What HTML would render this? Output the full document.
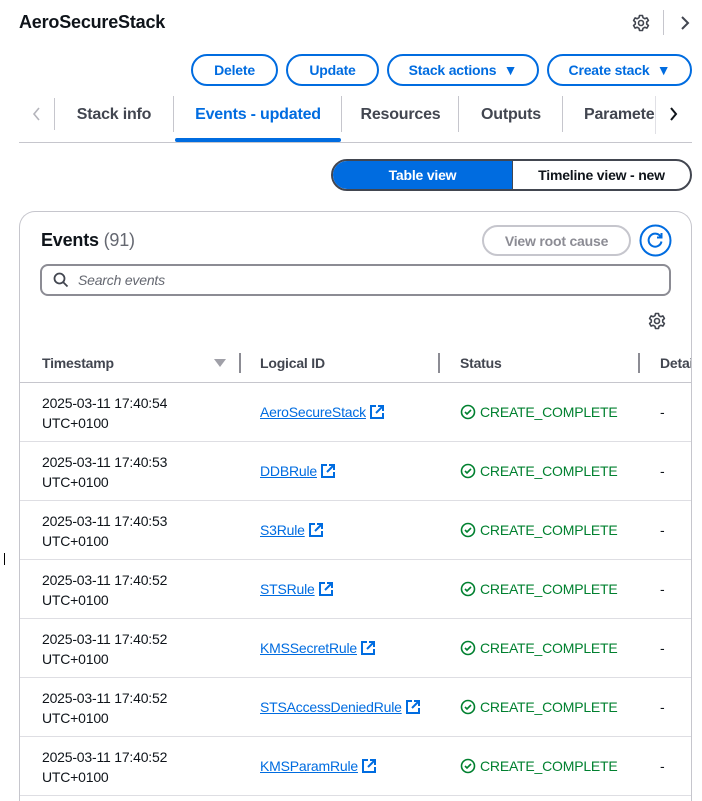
<!DOCTYPE html>
<html><head><meta charset="utf-8"><style>
*{box-sizing:border-box;margin:0;padding:0}
html,body{width:702px;height:801px;overflow:hidden}
body{background:#fff;font-family:"Liberation Sans",sans-serif;color:#0f141a;position:relative;letter-spacing:-0.2px}
.a{position:absolute}
.btn{position:absolute;height:32px;border:2px solid #006ce0;border-radius:16px;color:#006ce0;font-weight:bold;font-size:14px;display:flex;align-items:center;justify-content:center;top:54px}
.tab{position:absolute;top:96px;height:38px;font-size:16px;font-weight:bold;color:#424650;display:flex;align-items:center;justify-content:center}
.sep{position:absolute;width:1px;background:#c6c6cd}
.card{position:absolute;left:19px;top:211px;width:673px;height:590px;border:1px solid #c6c6cd;border-bottom:none;border-radius:16px 16px 0 0;overflow:hidden}
.row{position:absolute;left:0;width:680px;height:59px;border-top:1px solid #dedee3;font-size:14px}
.ts{position:absolute;left:22px;top:10px;line-height:20px}
.lid{position:absolute;left:240px;top:21px;color:#006ce0;text-decoration:underline;display:flex;align-items:center;gap:3px}
.st{position:absolute;left:440px;top:21px;color:#00802f;display:flex;align-items:center;gap:4px}
.dash{position:absolute;left:640px;top:21px}
</style></head><body>
<div class="a" style="left:19px;top:12px;font-size:18px;font-weight:bold">AeroSecureStack</div>
<svg class="a" style="left:632px;top:14px" width="18" height="18" viewBox="0 0 18 18"><path d="M7.5 1.5h3l.5 2.2 1.8 1 2.1-.8 1.5 2.6-1.7 1.5v2l1.7 1.5-1.5 2.6-2.1-.8-1.8 1-.5 2.2h-3l-.5-2.2-1.8-1-2.1.8-1.5-2.6 1.7-1.5v-2L1.6 6.5l1.5-2.6 2.1.8 1.8-1z" fill="none" stroke="#424650" stroke-width="1.6" stroke-linejoin="round"/><circle cx="9" cy="9" r="2.5" fill="none" stroke="#424650" stroke-width="1.6"/></svg>
<div class="sep" style="left:663px;top:10px;height:25px"></div>
<svg class="a" style="left:680px;top:15px" width="10" height="16"><path d="M2 2l6 6-6 6" fill="none" stroke="#424650" stroke-width="2"/></svg>
<div class="btn" style="left:191px;width:87px">Delete</div>
<div class="btn" style="left:286px;width:93px">Update</div>
<div class="btn" style="left:387px;width:152px">Stack actions &nbsp;▼</div>
<div class="btn" style="left:547px;width:145px">Create stack &nbsp;▼</div>
<svg class="a" style="left:32px;top:106px" width="10" height="16"><path d="M7 2l-5 6 5 6" fill="none" stroke="#b4b4bb" stroke-width="1.6"/></svg>
<div class="sep" style="left:54px;top:98px;height:32px"></div>
<div class="tab" style="left:55px;width:118px">Stack info</div>
<div class="sep" style="left:173px;top:96px;height:36px"></div>
<div class="tab" style="left:174px;width:168px;color:#006ce0">Events - updated</div>
<div class="a" style="left:175px;top:138px;width:166px;height:4px;background:#006ce0;border-radius:2px"></div>
<div class="sep" style="left:341px;top:96px;height:36px"></div>
<div class="tab" style="left:342px;width:117px">Resources</div>
<div class="sep" style="left:458px;top:96px;height:36px"></div>
<div class="tab" style="left:459px;width:104px">Outputs</div>
<div class="sep" style="left:562px;top:96px;height:36px"></div>
<div class="tab" style="left:563px;width:95px;justify-content:flex-start;padding-left:21px;overflow:hidden;white-space:nowrap">Parameters</div>
<div class="a" style="left:655px;top:96px;width:47px;height:38px;background:#fff;border-left:1px solid #e0e0e5"></div>
<svg class="a" style="left:669px;top:106px" width="10" height="16"><path d="M2 2l5 6-5 6" fill="none" stroke="#0f141a" stroke-width="2"/></svg>
<div class="a" style="left:19px;top:142px;width:673px;height:1px;background:#c6c6cd"></div>
<div class="a" style="left:331px;top:159px;width:361px;height:32px;border:2px solid #424650;border-radius:16px;overflow:hidden;display:flex;font-size:14px;font-weight:bold">
<div style="width:180px;background:#006ce0;color:#fff;display:flex;align-items:center;justify-content:center;border-right:1px solid #424650">Table view</div>
<div style="flex:1;display:flex;align-items:center;justify-content:center;color:#0f141a">Timeline view - new</div></div>
<div class="card">
<div class="a" style="left:21px;top:18px;font-size:18px"><b>Events</b> <span style="color:#656871">(91)</span></div>
<div class="a" style="left:462px;top:13px;width:149px;height:31px;border:2px solid #c6c6cd;border-radius:16px;color:#8c8c94;font-weight:bold;font-size:14px;display:flex;align-items:center;justify-content:center">View root cause</div>
<svg class="a" style="left:619px;top:12px" width="33" height="33" viewBox="0 0 33 33"><circle cx="16.5" cy="16.5" r="15" fill="none" stroke="#006ce0" stroke-width="2"/><path d="M21.5 12.5a6.5 6.5 0 1 0 1 5" fill="none" stroke="#006ce0" stroke-width="2"/><path d="M22.5 9v4.5h-4.5" fill="none" stroke="#006ce0" stroke-width="2"/></svg>
<div class="a" style="left:20px;top:52px;width:631px;height:32px;border:2px solid #8c8c94;border-radius:8px"></div>
<svg class="a" style="left:33px;top:60px" width="16" height="16"><circle cx="6.5" cy="6.5" r="5" fill="none" stroke="#424650" stroke-width="1.8"/><path d="M10 10l4.5 4.5" stroke="#424650" stroke-width="1.8"/></svg>
<div class="a" style="left:58px;top:60px;font-size:14px;font-style:italic;color:#656871">Search events</div>
<svg class="a" style="left:628px;top:100px" width="18" height="18" viewBox="0 0 18 18"><path d="M7.5 1.5h3l.5 2.2 1.8 1 2.1-.8 1.5 2.6-1.7 1.5v2l1.7 1.5-1.5 2.6-2.1-.8-1.8 1-.5 2.2h-3l-.5-2.2-1.8-1-2.1.8-1.5-2.6 1.7-1.5v-2L1.6 6.5l1.5-2.6 2.1.8 1.8-1z" fill="none" stroke="#424650" stroke-width="1.6" stroke-linejoin="round"/><circle cx="9" cy="9" r="2.5" fill="none" stroke="#424650" stroke-width="1.6"/></svg>
<div class="a" style="left:22px;top:143px;font-size:14px;font-weight:bold;color:#424650">Timestamp</div>
<svg class="a" style="left:194px;top:147px" width="12" height="9"><path d="M0 0h12L6 8z" fill="#a0a0a8"/></svg>
<div class="sep" style="left:219px;top:141px;height:20px;background:#8c8c94;width:2px"></div>
<div class="a" style="left:240px;top:143px;font-size:14px;font-weight:bold;color:#424650">Logical ID</div>
<div class="sep" style="left:418px;top:141px;height:20px;background:#8c8c94;width:2px"></div>
<div class="a" style="left:440px;top:143px;font-size:14px;font-weight:bold;color:#424650">Status</div>
<div class="sep" style="left:618px;top:141px;height:20px;background:#8c8c94;width:2px"></div>
<div class="a" style="left:640px;top:143px;font-size:14px;font-weight:bold;color:#424650;white-space:nowrap">Details</div>
<div class="row" style="top:170px;border-color:#c6c6cd"><div class="ts">2025-03-11 17:40:54<br>UTC+0100</div><div class="lid">AeroSecureStack <svg width="16" height="16"><path d="M7 2H2v12h12V9" fill="none" stroke="#006ce0" stroke-width="2"/><path d="M9 2h5v5M14 2L7 9" fill="none" stroke="#006ce0" stroke-width="2"/></svg></div><div class="st"><svg width="16" height="16"><circle cx="8" cy="8" r="6.5" fill="none" stroke="#00802f" stroke-width="1.6"/><path d="M5 8l2 2 4-4" fill="none" stroke="#00802f" stroke-width="1.6"/></svg>CREATE_COMPLETE</div><div class="dash">-</div></div>
<div class="row" style="top:229px"><div class="ts">2025-03-11 17:40:53<br>UTC+0100</div><div class="lid">DDBRule <svg width="16" height="16"><path d="M7 2H2v12h12V9" fill="none" stroke="#006ce0" stroke-width="2"/><path d="M9 2h5v5M14 2L7 9" fill="none" stroke="#006ce0" stroke-width="2"/></svg></div><div class="st"><svg width="16" height="16"><circle cx="8" cy="8" r="6.5" fill="none" stroke="#00802f" stroke-width="1.6"/><path d="M5 8l2 2 4-4" fill="none" stroke="#00802f" stroke-width="1.6"/></svg>CREATE_COMPLETE</div><div class="dash">-</div></div>
<div class="row" style="top:288px"><div class="ts">2025-03-11 17:40:53<br>UTC+0100</div><div class="lid">S3Rule <svg width="16" height="16"><path d="M7 2H2v12h12V9" fill="none" stroke="#006ce0" stroke-width="2"/><path d="M9 2h5v5M14 2L7 9" fill="none" stroke="#006ce0" stroke-width="2"/></svg></div><div class="st"><svg width="16" height="16"><circle cx="8" cy="8" r="6.5" fill="none" stroke="#00802f" stroke-width="1.6"/><path d="M5 8l2 2 4-4" fill="none" stroke="#00802f" stroke-width="1.6"/></svg>CREATE_COMPLETE</div><div class="dash">-</div></div>
<div class="row" style="top:347px"><div class="ts">2025-03-11 17:40:52<br>UTC+0100</div><div class="lid">STSRule <svg width="16" height="16"><path d="M7 2H2v12h12V9" fill="none" stroke="#006ce0" stroke-width="2"/><path d="M9 2h5v5M14 2L7 9" fill="none" stroke="#006ce0" stroke-width="2"/></svg></div><div class="st"><svg width="16" height="16"><circle cx="8" cy="8" r="6.5" fill="none" stroke="#00802f" stroke-width="1.6"/><path d="M5 8l2 2 4-4" fill="none" stroke="#00802f" stroke-width="1.6"/></svg>CREATE_COMPLETE</div><div class="dash">-</div></div>
<div class="row" style="top:406px"><div class="ts">2025-03-11 17:40:52<br>UTC+0100</div><div class="lid">KMSSecretRule <svg width="16" height="16"><path d="M7 2H2v12h12V9" fill="none" stroke="#006ce0" stroke-width="2"/><path d="M9 2h5v5M14 2L7 9" fill="none" stroke="#006ce0" stroke-width="2"/></svg></div><div class="st"><svg width="16" height="16"><circle cx="8" cy="8" r="6.5" fill="none" stroke="#00802f" stroke-width="1.6"/><path d="M5 8l2 2 4-4" fill="none" stroke="#00802f" stroke-width="1.6"/></svg>CREATE_COMPLETE</div><div class="dash">-</div></div>
<div class="row" style="top:465px"><div class="ts">2025-03-11 17:40:52<br>UTC+0100</div><div class="lid">STSAccessDeniedRule <svg width="16" height="16"><path d="M7 2H2v12h12V9" fill="none" stroke="#006ce0" stroke-width="2"/><path d="M9 2h5v5M14 2L7 9" fill="none" stroke="#006ce0" stroke-width="2"/></svg></div><div class="st"><svg width="16" height="16"><circle cx="8" cy="8" r="6.5" fill="none" stroke="#00802f" stroke-width="1.6"/><path d="M5 8l2 2 4-4" fill="none" stroke="#00802f" stroke-width="1.6"/></svg>CREATE_COMPLETE</div><div class="dash">-</div></div>
<div class="row" style="top:524px;height:66px"><div class="ts">2025-03-11 17:40:52<br>UTC+0100</div><div class="lid">KMSParamRule <svg width="16" height="16"><path d="M7 2H2v12h12V9" fill="none" stroke="#006ce0" stroke-width="2"/><path d="M9 2h5v5M14 2L7 9" fill="none" stroke="#006ce0" stroke-width="2"/></svg></div><div class="st"><svg width="16" height="16"><circle cx="8" cy="8" r="6.5" fill="none" stroke="#00802f" stroke-width="1.6"/><path d="M5 8l2 2 4-4" fill="none" stroke="#00802f" stroke-width="1.6"/></svg>CREATE_COMPLETE</div><div class="dash">-</div><div class="a" style="left:0;top:58px;width:680px;height:1px;background:#dedee3"></div></div>
</div>
<div class="a" style="left:4px;top:553px;width:1px;height:12px;background:#000"></div>
</body></html>
